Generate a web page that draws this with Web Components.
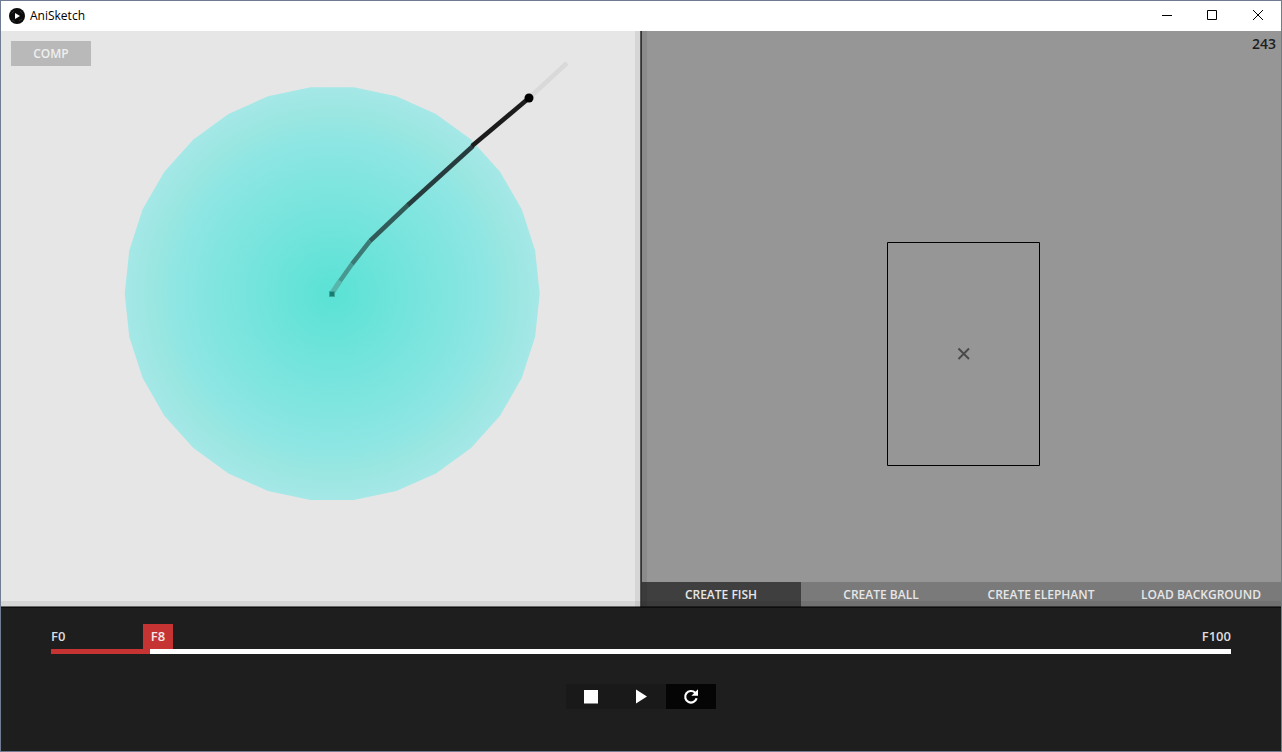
<!DOCTYPE html>
<html lang="en">
<head>
<meta charset="utf-8">
<title>AniSketch</title>
<style>
  html, body { margin: 0; height: 100%; }
  body { font-family: "Open Sans", "Noto Sans", sans-serif; background: #1e1e1e; }
</style>
</head>
<body>
<ani-app></ani-app>

<template id="ani-app">
  <style>
    :host {
      display: grid; box-sizing: border-box; height: 100vh; min-height: 400px;
      grid-template-rows: auto 1fr auto; border: 1px solid #6f7c92;
    }
    main { display: grid; grid-template-columns: 1fr 1fr; position: relative; min-height: 0; }
    split-edge { position: absolute; pointer-events: none; }
    .v { left: calc(50% - 6px); top: 0; bottom: 0; width: 12px; }
    .h { left: 0; right: 0; bottom: -1px; height: 7px; }
  </style>
  <title-bar>AniSketch</title-bar>
  <main>
    <sketch-canvas><tool-button slot="tools" kind="comp">COMP</tool-button></sketch-canvas>
    <scene-view frame="243">
      <tool-button slot="tools" kind="active">CREATE FISH</tool-button>
      <tool-button slot="tools">CREATE BALL</tool-button>
      <tool-button slot="tools">CREATE ELEPHANT</tool-button>
      <tool-button slot="tools">LOAD BACKGROUND</tool-button>
    </scene-view>
    <split-edge class="v"></split-edge>
    <split-edge class="h"></split-edge>
  </main>
  <time-line></time-line>
</template>

<template id="title-bar">
  <style>
    :host { display: flex; align-items: center; height: 30px; background: #fff; color: #000; }
    .logo { margin-left: 8px; flex: none; }
    h1 { margin: 0 auto 0 5px; font-size: 12px; line-height: 16px; font-weight: 400; }
    button { width: 46px; height: 30px; padding: 0; border: 0; background: none; display: grid; place-items: center; }
  </style>
  <svg class="logo" width="16" height="16" viewBox="0 0 16 16" aria-hidden="true">
    <circle cx="8" cy="8" r="8" fill="#0b0b0b"/>
    <path d="M2.500 5.500 5 3M3 12l3 1.500M11 3l2.500 2.500M10 13l3-2" stroke="#333" fill="none"/>
    <path d="M6 5v6l5-3z" fill="#fff"/>
  </svg>
  <h1><slot></slot></h1>
  <button aria-label="Minimize"><svg width="12" height="12"><path d="M2 5.500h10" stroke="#000"/></svg></button>
  <button aria-label="Maximize"><svg width="12" height="12"><path d="M1.500 .500h9v9h-9z" fill="none" stroke="#000"/></svg></button>
  <button aria-label="Close"><svg width="12" height="12"><path d="M1 0l10 10M11 0L1 10" stroke="#000"/></svg></button>
</template>

<template id="tool-button">
  <style>
    :host { display: block; flex: 1; }
    button {
      display: block; width: 100%; height: 25px; padding: 0; border: 0;
      font: 600 12px/25px "Open Sans", "Noto Sans", sans-serif;
      color: #e6e6e6; background: #7a7a7a; white-space: nowrap;
    }
    :host([kind="active"]) button { background: #3f3f3f; }
    :host([kind="comp"]) { flex: none; width: 80px; }
    :host([kind="comp"]) button { background: #b9b9b9; color: #efefef; }
  </style>
  <button><slot></slot></button>
</template>

<template id="sketch-canvas">
  <style>
    :host { display: grid; background: #e6e6e6; min-width: 0; min-height: 0; overflow: hidden; }
    svg, .tools { grid-area: 1 / 1; }
    svg { width: 100%; height: 100%; }
    .tools { display: flex; padding: 10px; align-self: start; }
  </style>
  <svg role="img" aria-label="Motion path drawing">
    <defs>
      <radialGradient id="glow" gradientUnits="userSpaceOnUse" cx="331" cy="263" r="208">
        <stop offset="0" stop-color="#5ae2d5"/>
        <stop offset=".76" stop-color="#8fe6e3"/>
        <stop offset=".86" stop-color="#9ae6e1"/>
        <stop offset="1" stop-color="#a5e8e7"/>
      </radialGradient>
    </defs>
    <polygon fill="url(#glow)"/>
    <g fill="none" stroke-width="4.500">
      <path d="M528 67l38-35" stroke="#d9d9d9"/>
      <path d="M331 262l8-12" stroke="#57b5ab" stroke-width="5"/>
      <path d="M339 250l12-17" stroke="#479890"/>
      <path d="M351 233l18-23" stroke="#3b7a75"/>
      <path d="M369 210l39-37" stroke="#315b59"/>
      <path d="M407 174l65-59" stroke="#273c3e"/>
      <path d="M471 115l57-48" stroke="#1c1c1d"/>
    </g>
    <circle cx="528" cy="67" r="4.500"/>
    <path d="M328.500 260.500h5v5h-5z" fill="#167d70" stroke="#3aa596"/>
  </svg>
  <div class="tools"><slot name="tools"></slot></div>
</template>

<template id="scene-view">
  <style>
    :host { display: grid; grid-template-rows: 1fr auto; background: #969696; min-width: 0; min-height: 0; overflow: hidden; }
    svg { grid-area: 1 / 1; width: 100%; height: 100%; }
    output { grid-area: 1 / 1; justify-self: end; padding: 3px 5px; font-size: 14px; line-height: 19px; font-weight: 600; color: #1e1e1e; }
    nav { display: flex; }
  </style>
  <svg role="img" aria-label="Stage with selection frame">
    <path d="M246.500 211.500h152v223h-152z" fill="none" stroke="#000"/>
    <path d="M317.500 317.500l10.500 10.500M328 317.500l-10.500 10.500" fill="none" stroke="#4a4a4a" stroke-width="2"/>
  </svg>
  <output></output>
  <nav><slot name="tools"></slot></nav>
</template>

<template id="split-edge">
  <style>
    :host { display: block; }
    :host(.v) { background: linear-gradient(to right, #00000012 5px, #555 5px 6px, #333 6px 7px, #00000012 7px); }
    :host(.h) { background: linear-gradient(#00000012 5px, #0000008c 5px 6px, #0d0d0d 6px); }
  </style>
</template>

<template id="time-line">
  <style>
    :host { display: flex; flex-direction: column; box-sizing: border-box; height: 144px; padding: 17px 50px 0; background: #1e1e1e; color: #dedede; --played: 99px; }
    .labels { position: relative; display: flex; justify-content: space-between; font-size: 13px; line-height: 25px; font-weight: 600; }
    output { position: absolute; left: calc(var(--played) - 7px); width: 30px; text-align: center; background: #c53333; color: #f5e6e6; }
    input { appearance: none; display: block; width: 100%; height: 5px; margin: 0; background: linear-gradient(to right, #c53333 var(--played), #fff var(--played)); }
    input::-webkit-slider-thumb { appearance: none; width: 1px; height: 5px; background: transparent; }
    .controls { display: flex; justify-content: center; margin-top: 30px; }
    button { width: 50px; height: 25px; padding: 0; border: 0; background: #191919; display: grid; place-items: center; }
    button[aria-pressed="true"] { background: #050505; }
    svg { display: block; fill: #fff; }
  </style>
  <div class="labels"><span>F0</span><output for="frame">F8</output><span>F100</span></div>
  <input id="frame" type="range" min="0" max="100" value="8" aria-label="Frame">
  <div class="controls">
    <button aria-label="Stop"><svg width="20" height="19"><path d="M3 3h14v13.500H3z"/></svg></button>
    <button aria-label="Play"><svg width="20" height="19"><path d="M5 2.500v14l11-7z"/></svg></button>
    <button aria-label="Loop" aria-pressed="true"><svg width="20" height="20"><path d="M14.200 5.800A5.800 5.800 0 1 0 15.600 11.300" fill="none" stroke="#fff" stroke-width="2.200"/><path d="M17 2.200v6.600h-6.600z"/></svg></button>
  </div>
</template>

<script>
  class TemplateElement extends HTMLElement {
    constructor() {
      super();
      const template = document.getElementById(this.localName);
      this.attachShadow({ mode: "open" }).append(template.content.cloneNode(true));
    }
  }
  class TitleBar extends TemplateElement {}
  class ToolButton extends TemplateElement {}
  class SplitEdge extends TemplateElement {}
  class AniApp extends TemplateElement {}

  class SketchCanvas extends TemplateElement {
    connectedCallback() {
      // The ball is a thirty-sided polygon around the start of the stroke.
      const points = Array.from({ length: 30 }, (_, i) => {
        const a = i * Math.PI / 15;
        return `${331.2 + 207.5 * Math.cos(a)},${262.7 + 207.5 * Math.sin(a)}`;
      });
      this.shadowRoot.querySelector("polygon").setAttribute("points", points.join(" "));
    }
  }
  class SceneView extends TemplateElement {
    connectedCallback() {
      this.shadowRoot.querySelector("output").textContent = this.getAttribute("frame");
    }
  }
  class TimeLine extends TemplateElement {
    connectedCallback() {
      const input = this.shadowRoot.querySelector("input");
      input.addEventListener("input", () => {
        this.style.setProperty("--played", `${input.value}%`);
        this.shadowRoot.querySelector("output").textContent = `F${input.value}`;
      });
    }
  }
  customElements.define("title-bar", TitleBar);
  customElements.define("tool-button", ToolButton);
  customElements.define("split-edge", SplitEdge);
  customElements.define("sketch-canvas", SketchCanvas);
  customElements.define("scene-view", SceneView);
  customElements.define("time-line", TimeLine);
  customElements.define("ani-app", AniApp);
</script>
</body>
</html>
